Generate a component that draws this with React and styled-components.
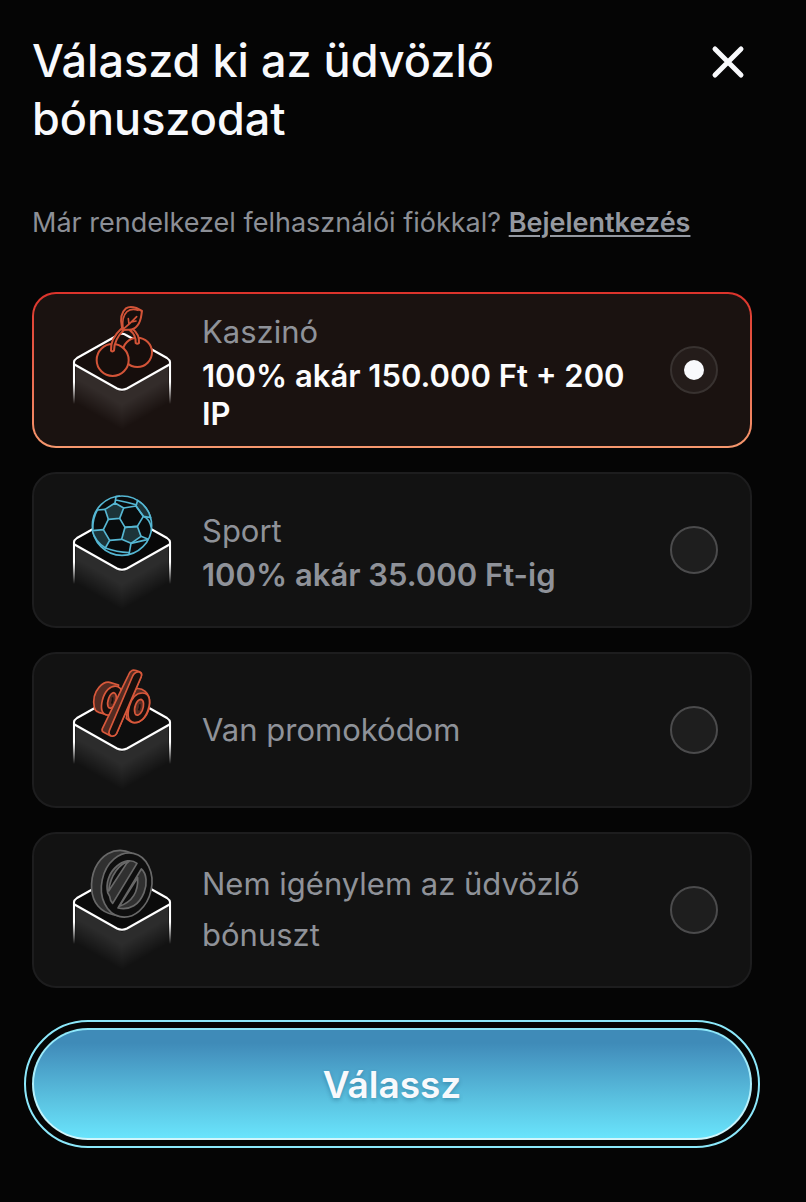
import React, { useState } from 'react'
import styled, { createGlobalStyle, css } from 'styled-components'

const GlobalStyle = createGlobalStyle`
  * {
    box-sizing: border-box;
  }
  body {
    margin: 0;
    background: #050505;
    color: #f8f9fc;
    font-family: Inter, "Liberation Sans", sans-serif;
  }
`

const Page = styled.form`
  display: flex;
  flex-direction: column;
  padding: 32px 54px 54px 32px;
`

const Header = styled.header`
  display: flex;
  align-items: flex-start;
  justify-content: space-between;
  gap: 32px;
`

const Title = styled.h1`
  max-width: 560px;
  margin: 0;
  font-size: 45px;
  font-weight: 500;
  line-height: 58px;
`

const CloseButton = styled.button`
  display: flex;
  flex-shrink: 0;
  padding: 6px 0;
  border: 0;
  background: none;
  color: #f8f9fc;
  cursor: pointer;
`

const LoginText = styled.p`
  margin: 54px 0 48px;
  color: #8c8f96;
  font-size: 27px;
  line-height: 42px;
`

const LoginLink = styled.a`
  color: #9599a1;
  font-weight: 600;
  text-decoration: underline;
  text-decoration-thickness: 2px;
  text-underline-offset: 3px;
`

const BonusList = styled.div`
  display: flex;
  flex-direction: column;
  gap: 24px;
`

const BonusCard = styled.label`
  display: flex;
  align-items: center;
  min-height: 156px;
  padding: 0 32px 0 26px;
  border: 2px solid #1d1d1e;
  border-radius: 24px;
  background: #121212;
  cursor: pointer;

  ${({ $active }) =>
    $active &&
    css`
      border-color: transparent;
      background:
        linear-gradient(#1a1210, #1a1210) padding-box,
        linear-gradient(#dc332b, #f7986e) border-box;
    `}
`

const Art = styled.svg`
  flex-shrink: 0;
  width: 130px;
  height: 140px;
`

const BonusText = styled.span`
  display: flex;
  flex: 1;
  flex-direction: column;
  min-width: 0;
  margin: 0 32px 0 12px;
  padding-bottom: 2px;
`

const BonusName = styled.span`
  color: #8f9299;
  font-size: 31px;
  line-height: 51px;
`

const BonusOffer = styled.span`
  color: ${({ $active }) => ($active ? '#fcfcfd' : '#8f9299')};
  font-size: 31px;
  font-weight: 600;
  line-height: 38px;
`

const Radio = styled.input`
  display: grid;
  flex-shrink: 0;
  place-items: center;
  width: 48px;
  height: 48px;
  margin: 0;
  border: 2px solid #4b4b4c;
  border-radius: 50%;
  background: #1e1e1e;
  appearance: none;

  &:checked {
    border-color: #383230;
    background: #241c1a;
  }
  &:checked::before {
    width: 20px;
    height: 20px;
    border-radius: 50%;
    background: #f8f9fc;
    content: '';
  }
`

const SubmitButton = styled.button`
  height: 112px;
  margin-top: 40px;
  border: 2px solid transparent;
  border-radius: 56px;
  outline: 2px solid #8ce8fb;
  outline-offset: 6px;
  background:
    linear-gradient(#3f8bb8 12%, #4595c1 22%, #5bc3e1 66%, #69e4fc) padding-box,
    linear-gradient(#8ce8fb, #d2f6fc) border-box;
  color: #f8f9fc;
  font-family: inherit;
  font-size: 37px;
  font-weight: 600;
  text-shadow: 0 2px 4px rgba(0, 50, 80, 0.3);
  cursor: pointer;
`

function Cube({ id, top }) {
  return (
    <>
      <defs>
        <linearGradient id={`${id}-left`} gradientUnits="userSpaceOnUse" x1="16" y1="78" x2="5" y2="97">
          <stop offset="0" stopColor="#fff" stopOpacity="0.11" />
          <stop offset="1" stopColor="#fff" stopOpacity="0" />
        </linearGradient>
        <linearGradient id={`${id}-right`} gradientUnits="userSpaceOnUse" x1="108" y1="78" x2="119" y2="97">
          <stop offset="0" stopColor="#fff" stopOpacity="0.11" />
          <stop offset="1" stopColor="#fff" stopOpacity="0" />
        </linearGradient>
        <linearGradient id={`${id}-edge`} gradientUnits="userSpaceOnUse" x1="0" y1="82" x2="0" y2="104">
          <stop offset="0" stopColor="#fff" />
          <stop offset="1" stopColor="#fff" stopOpacity="0" />
        </linearGradient>
      </defs>
      <path d="M16 66L62 92V134L16 108Z" fill={`url(#${id}-left)`} />
      <path d="M108 66L62 92V134L108 108Z" fill={`url(#${id}-right)`} />
      <path d="M14 62Q14 60 17 58L58 35Q62 32.5 66 35L107 58Q110 60 110 62L109.5 64.5L67 88.5Q62 91 57 88.5L14.5 64.5Z" fill={top} />
      <g fill="none" strokeWidth="2.1">
        <path d="M14 104V62Q14 60 17 58L58 35Q62 32.5 66 35L107 58Q110 60 110 62V104" stroke={`url(#${id}-edge)`} />
        <path d="M14.5 64.5L57 88.5Q62 91 67 88.5L109.5 64.5" stroke="#fff" />
      </g>
    </>
  )
}

function Cherries() {
  return (
    <g transform="translate(-40 -15) scale(.33333)" stroke="#d35438" strokeWidth="6" strokeLinejoin="round" strokeLinecap="round" fill="#160e0c">
      <circle cx="352" cy="202" r="44" />
      <circle cx="278" cy="225" r="48" />
      <path d="M273 197C272 173 284 149 303 132L311 136C292 154 282 174 282 197Q278 201 273 197Z" />
      <path d="M347 174C348 158 341 144 330 136L338 132C351 142 358 157 357 174Q352 178 347 174Z" />
      <path d="M306 128C300 102 304 82 318 70Q329 62 349 69L366 78C363 91 365 106 352 122Q340 137 322 134L309 135Z" />
      <path d="M309 132C306 108 309 91 321 80Q335 69 354 76M309 133C324 121 338 108 350 95M327 118L325 101M335 111L348 108" fill="none" strokeWidth="5" />
    </g>
  )
}

function Football() {
  return (
    <g transform="scale(.33333)" stroke="#55b7d3" strokeWidth="5" strokeLinejoin="round" fill="none">
      <circle cx="186" cy="137" r="89" fill="#090b0c" />
      <g fill="#1c3439">
        <path d="M165 69L191 84L179 115L145 118L135 88Z" />
        <path d="M195 142L232 139L243 169L213 190L185 178Z" />
        <path d="M97 152L130 149L149 181L136 204Q104 183 97 152Z" />
        <path d="M228 78L233 61Q263 80 272 113L250 109Z" />
      </g>
      <path d="M191 84L228 78L250 109L232 139L195 142L179 115" />
      <path d="M145 118L130 149M149 181L185 178M165 69L168 50L180 48M168 60Q199 66 231 75M135 88L113 90M113 88Q98 114 98 148M243 169L265 178M250 109Q268 116 274 143M213 190L207 223M213 190Q239 184 265 178M136 204Q170 216 207 218" />
    </g>
  )
}

function Percent() {
  return (
    <g transform="scale(.33333)" stroke="#d8583b" strokeWidth="5" strokeLinejoin="round" fill="#542b22">
      <path d="M228 86C247 83 269 97 269 128C268 164 246 188 223 188Q211 187 199 175L206 126Z" />
      <path d="M149 67Q133 64 117 82C103 98 99 122 103 142Q105 153 116 157L143 165L176 75Z" />
      <path d="M171 79C188 85 190 104 185 127C179 149 161 167 142 165C125 163 121 145 127 121C134 94 151 75 171 79Z" fill="#160f0d" />
      <path d="M162 98C172 102 170 119 165 132C159 145 148 149 144 139C140 127 148 99 162 98Z" />
      <path d="M157 112Q160 118 155 131" fill="none" stroke="#160f0d" />
      <path d="M247 99C268 99 273 120 265 147C257 174 240 189 223 188C203 185 201 166 208 139C215 115 229 99 247 99Z" fill="#160f0d" />
      <path d="M243 118C253 121 252 137 247 151C240 166 229 170 225 160C220 145 229 119 243 118Z" />
      <path d="M239 133Q241 139 236 151" fill="none" stroke="#160f0d" />
      <path d="M215 32Q221 28 239 35Q248 38 243 50L169 222Q163 231 151 227L131 217Q124 214 127 206L205 46Q209 35 215 32Z" />
      <path d="M218 48Q226 33 238 36Q248 40 243 52L170 220Q164 231 153 227Q144 223 148 212Z" fill="#160f0d" />
    </g>
  )
}

function NoBonus() {
  return (
    <g transform="scale(.33333)" stroke="#686868" strokeWidth="5" strokeLinejoin="round" fill="#303030">
      <path d="M214 39Q178 22 143 41C110 61 92 101 95 148C98 188 121 216 160 224L190 230Z" />
      <ellipse cx="200" cy="135" rx="75" ry="97" transform="rotate(12 200 135)" fill="#0e0e0e" />
      <path d="M231 70C214 57 191 61 171 78C146 99 137 130 143 158L149 169Q150 181 158 190Z" />
      <path d="M244 87C261 101 262 133 252 158C238 194 210 212 174 204Z" />
      <path d="M207 64C180 69 151 105 146 153L200 70ZM233 113C235 151 221 184 178 199Z" fill="#0e0e0e" />
    </g>
  )
}

const bonuses = [
  { id: 'casino', name: 'Kaszinó', offer: '100% akár 150.000 Ft + 200 IP', Icon: Cherries, top: '#160e0c' },
  { id: 'sport', name: 'Sport', offer: '100% akár 35.000 Ft-ig', Icon: Football, top: '#080808' },
  { id: 'promo', name: 'Van promokódom', Icon: Percent, top: '#0e0e0e' },
  { id: 'none', name: 'Nem igénylem az üdvözlő bónuszt', Icon: NoBonus, top: '#0b0b0b' },
]

function BonusOption({ bonus, active, onSelect }) {
  const { id, name, offer, Icon, top } = bonus

  return (
    <BonusCard $active={active} htmlFor={id}>
      <Art viewBox="0 0 130 140" aria-hidden="true">
        <Cube id={id} top={top} />
        <Icon />
      </Art>
      <BonusText>
        <BonusName>{name}</BonusName>
        {offer && <BonusOffer $active={active}>{offer}</BonusOffer>}
      </BonusText>
      <Radio type="radio" id={id} name="bonus" value={id} checked={active} onChange={() => onSelect(id)} />
    </BonusCard>
  )
}

function App() {
  const [selected, setSelected] = useState('casino')

  return (
    <>
      <GlobalStyle />
      <Page onSubmit={(e) => e.preventDefault()}>
        <Header>
          <Title>Válaszd ki az üdvözlő bónuszodat</Title>
          <CloseButton type="button" aria-label="Bezárás">
            <svg width="48" height="48" viewBox="0 0 48 48" fill="none" stroke="currentColor" strokeWidth="5" strokeLinecap="round">
              <path d="M11 11L37 37M37 11L11 37" />
            </svg>
          </CloseButton>
        </Header>
        <LoginText>
          Már rendelkezel felhasználói fiókkal? <LoginLink href="#login">Bejelentkezés</LoginLink>
        </LoginText>
        <BonusList role="radiogroup" aria-label="Üdvözlő bónusz">
          {bonuses.map((bonus) => (
            <BonusOption key={bonus.id} bonus={bonus} active={bonus.id === selected} onSelect={setSelected} />
          ))}
        </BonusList>
        <SubmitButton type="submit">Válassz</SubmitButton>
      </Page>
    </>
  )
}

export default App
